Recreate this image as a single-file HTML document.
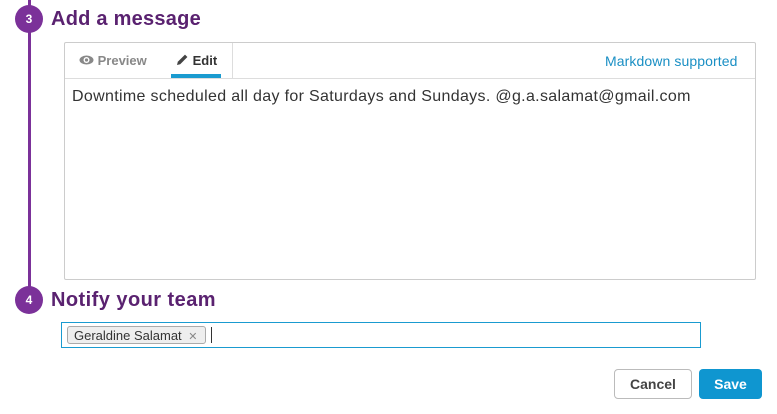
<!DOCTYPE html>
<html><head><style>
body{margin:0;width:777px;height:414px;background:#fff;font-family:"Liberation Sans",sans-serif;position:relative;overflow:hidden}
.a{position:absolute}
.line{left:28px;top:0;width:3px;height:300px;background:#7b3199}
.circ{width:28px;height:28px;border-radius:50%;background:#7b3199;color:#fff;font-size:12px;font-weight:bold;text-align:center;line-height:28px}
.h{font-size:20px;font-weight:bold;color:#5a2270;letter-spacing:0.25px}
.box{left:64px;top:42px;width:690px;height:236px;border:1px solid #ccc;border-radius:2px}
.tabs{left:0;top:0;width:690px;height:35px;border-bottom:1px solid #ddd}
.btn{border-radius:4px;font-size:14px;font-weight:bold;text-align:center;line-height:30px;height:30px}
</style></head><body>
<div class="a line"></div>
<div class="a circ" style="left:15px;top:5px">3</div>
<div class="a h" style="left:51px;top:8px">Add a message</div>
<div class="a box">
 <div class="a tabs"></div>
 <div class="a" style="left:14px;top:10px;font-size:13px;font-weight:bold;color:#888">
  <svg width="15" height="10" viewBox="0 0 15 10" style="vertical-align:0"><ellipse cx="7.5" cy="5" rx="7" ry="4.5" fill="#888"/><circle cx="7.5" cy="5" r="3" fill="#fff"/><circle cx="7.5" cy="5" r="1.6" fill="#888"/></svg> Preview</div>
 <div class="a" style="left:111px;top:10px;font-size:13px;font-weight:bold;color:#333">
  <svg width="13" height="13" viewBox="0 0 13 13" style="vertical-align:-1px"><path d="M1 12 L1.8 8.8 L9 1.6 L11.4 4 L4.2 11.2 Z" fill="#444"/></svg> Edit</div>
 <div class="a" style="left:106px;top:31px;width:50px;height:4px;background:#1a9bd0"></div>
 <div class="a" style="left:167px;top:0;width:1px;height:35px;background:#ddd"></div>
 <div class="a" style="left:540px;top:10px;font-size:14px;color:#1a8fc4;letter-spacing:0.1px">Markdown supported</div>
 <div class="a" style="left:7px;top:45px;font-size:16px;color:#333;letter-spacing:0.33px;white-space:nowrap">Downtime scheduled all day for Saturdays and Sundays. @g.a.salamat@gmail.com</div>
</div>
<div class="a circ" style="left:15px;top:286px">4</div>
<div class="a h" style="left:51px;top:289px;letter-spacing:0.45px">Notify your team</div>
<div class="a" style="left:61px;top:322px;width:638px;height:24px;border:1px solid #1a9bd0"></div>
<div class="a" style="left:67px;top:326px;height:18px;border:1px solid #aaa;border-radius:3px;background:#eee;font-size:13px;color:#333;line-height:18px;padding-left:6px;box-sizing:border-box;width:139px">Geraldine Salamat <span style="color:#888;font-size:11px;margin-left:3px">✕</span></div>
<div class="a" style="left:211px;top:327px;width:1px;height:16px;background:#333"></div>
<div class="a btn" style="left:614px;top:369px;width:76px;border:1px solid #bbb;color:#444;height:28px;line-height:28px">Cancel</div>
<div class="a btn" style="left:699px;top:369px;width:63px;background:#0f96d0;color:#fff">Save</div>
</body></html>
